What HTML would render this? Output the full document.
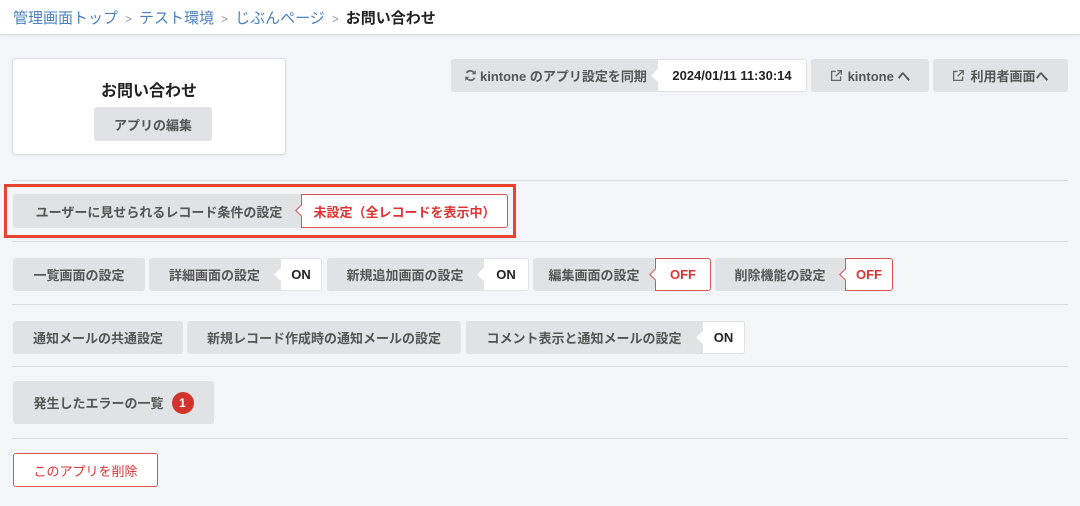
<!DOCTYPE html><html><head><meta charset="utf-8"><style>
*{box-sizing:border-box;margin:0;padding:0}
body{width:1080px;height:506px;background:#f4f5f9;font-family:"Liberation Sans","Noto Sans CJK JP",sans-serif;position:relative;overflow:hidden}
.a{position:absolute}
.hdr{left:0;top:0;width:1080px;height:35px;background:#fff;border-bottom:1px solid #dcdde0;box-shadow:0 1px 2px rgba(0,0,0,.06)}
.bc{left:13px;top:7px;font-size:15px;color:#4a7fc1;white-space:nowrap}
.bc .s{color:#999;font-size:12px;margin:0 7px}
.bc b{color:#222}
.btn{background:#e1e2e5;border-radius:3px;color:#555;font-size:13px;font-weight:bold;display:flex;align-items:center;justify-content:center;white-space:nowrap}
.lab{background:#fff;border-radius:0 3px 3px 0;font-size:13px;font-weight:bold;color:#222;display:flex;align-items:center;justify-content:center;border:1px solid #e1e2e5}
.lab.r{color:#d33;border:1px solid #d9534f}
.lab::before{content:"";position:absolute;left:-5px;top:50%;margin-top:-5px;width:8px;height:8px;background:#fff;transform:rotate(45deg);border-left:1px solid transparent;border-bottom:1px solid transparent}
.lab.r::before{border-left-color:#d9534f;border-bottom-color:#d9534f}
.hr{left:12px;width:1056px;height:1px;background:#dcdde0}
</style></head><body>
<div class="a hdr"></div>
<div class="a bc">管理画面トップ<span class="s">&gt;</span>テスト環境<span class="s">&gt;</span>じぶんページ<span class="s">&gt;</span><b>お問い合わせ</b></div>

<div class="a" style="left:12px;top:58px;width:274px;height:97px;background:#fff;border:1px solid #dcdde0;border-radius:4px;box-shadow:0 1px 2px rgba(0,0,0,.05)"></div>
<div class="a" style="left:12px;top:77px;width:274px;text-align:center;font-size:16px;font-weight:bold;color:#222">お問い合わせ</div>
<div class="a btn" style="left:94px;top:107px;width:118px;height:34px">アプリの編集</div>

<div class="a btn" style="left:451px;top:59px;width:212px;height:33px;justify-content:flex-start;padding-left:13px;font-weight:bold">
<svg width="13" height="13" viewBox="0 0 16 16" style="margin-right:3px"><path d="M13 6A5.5 5.5 0 0 0 3 5M3 10a5.5 5.5 0 0 0 10 1" fill="none" stroke="#666" stroke-width="2.2"/><path d="M14.5 1.5v5h-5zM1.5 14.5v-5h5z" fill="#666"/></svg>kintone のアプリ設定を同期</div>
<div class="a lab" style="left:657px;top:59px;width:150px;height:33px;border-radius:3px">2024/01/11 11:30:14</div>
<div class="a btn" style="left:811px;top:59px;width:118px;height:33px"><svg width="13" height="13" viewBox="0 0 16 16" style="margin-right:5px"><path d="M7 3H2v11h11V9M9 2h5v5M14 2L7 9" fill="none" stroke="#666" stroke-width="1.6"/></svg>kintone へ</div>
<div class="a btn" style="left:933px;top:59px;width:135px;height:33px"><svg width="13" height="13" viewBox="0 0 16 16" style="margin-right:5px"><path d="M7 3H2v11h11V9M9 2h5v5M14 2L7 9" fill="none" stroke="#666" stroke-width="1.6"/></svg>利用者画面へ</div>

<div class="a hr" style="top:180px"></div>
<div class="a" style="left:4px;top:184px;width:512px;height:54px;border:3px solid #e8432f"></div>
<div class="a btn" style="left:13px;top:194px;width:292px;height:34px">ユーザーに見せられるレコード条件の設定</div>
<div class="a lab r" style="left:301px;top:194px;width:207px;height:34px">未設定（全レコードを表示中）</div>

<div class="a hr" style="top:241px"></div>
<div class="a btn" style="left:13px;top:258px;width:132px;height:33px">一覧画面の設定</div>
<div class="a btn" style="left:149px;top:258px;width:135px;height:33px;padding-right:4px">詳細画面の設定</div>
<div class="a lab" style="left:280px;top:258px;width:42px;height:33px">ON</div>
<div class="a btn" style="left:327px;top:258px;width:160px;height:33px;padding-right:4px">新規追加画面の設定</div>
<div class="a lab" style="left:483px;top:258px;width:46px;height:33px">ON</div>
<div class="a btn" style="left:533px;top:258px;width:126px;height:33px;padding-right:4px">編集画面の設定</div>
<div class="a lab r" style="left:655px;top:258px;width:56px;height:33px">OFF</div>
<div class="a btn" style="left:715px;top:258px;width:134px;height:33px;padding-right:4px">削除機能の設定</div>
<div class="a lab r" style="left:845px;top:258px;width:48px;height:33px">OFF</div>

<div class="a hr" style="top:304px"></div>
<div class="a btn" style="left:13px;top:321px;width:170px;height:33px">通知メールの共通設定</div>
<div class="a btn" style="left:187px;top:321px;width:274px;height:33px">新規レコード作成時の通知メールの設定</div>
<div class="a btn" style="left:466px;top:321px;width:240px;height:33px;padding-right:4px">コメント表示と通知メールの設定</div>
<div class="a lab" style="left:702px;top:321px;width:43px;height:33px">ON</div>

<div class="a hr" style="top:366px"></div>
<div class="a btn" style="left:13px;top:381px;width:201px;height:43px">発生したエラーの一覧<span style="display:inline-block;width:22px;height:22px;border-radius:50%;background:#d0342c;color:#fff;font-size:12px;text-align:center;line-height:22px;margin-left:8px">1</span></div>

<div class="a hr" style="top:438px"></div>
<div class="a" style="left:13px;top:453px;width:145px;height:34px;border:1px solid #d9534f;border-radius:3px;background:#fff;color:#d33;font-size:13px;display:flex;align-items:center;justify-content:center">このアプリを削除</div>
</body></html>
